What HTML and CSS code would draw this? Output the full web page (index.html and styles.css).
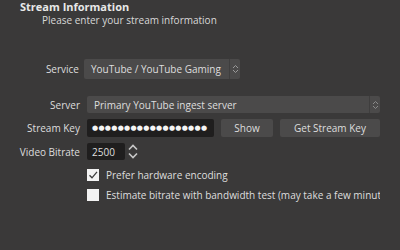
FILE: index.html
```html
<!DOCTYPE html>
<html lang="en">
<head>
    <meta charset="UTF-8">
    <title>Stream Information</title>
    <link rel="stylesheet" href="styles.css">
</head>
<body>

<div class="page">
    <!-- Header -->
    <div class="header">
        <h2>Stream Information</h2>
        <p>Please enter your stream information</p>
    </div>

    <div class="form">
        <!-- Service -->
        <div class="row service-row">
            <label>Service</label>
            <div class="combo service-combo">
                <span>YouTube / YouTube Gaming</span>
                <div class="combo-arrow">
                    <svg width="7" height="10" viewBox="0 0 7 10"><path d="M1 4 L3.5 1.5 L6 4 M1 6 L3.5 8.5 L6 6" fill="none" stroke="#9a9a9a" stroke-width="1"/></svg>
                </div>
            </div>
        </div>

        <!-- Server -->
        <div class="row server-row">
            <label>Server</label>
            <div class="combo server-combo">
                <span>Primary YouTube ingest server</span>
                <div class="combo-arrow">
                    <svg width="7" height="10" viewBox="0 0 7 10"><path d="M1 4 L3.5 1.5 L6 4 M1 6 L3.5 8.5 L6 6" fill="none" stroke="#8a8a8a" stroke-width="1"/></svg>
                </div>
            </div>
        </div>

        <!-- Stream Key -->
        <div class="row">
            <label>Stream Key</label>
            <div class="input key-input">&#9679;&#9679;&#9679;&#9679;&#9679;&#9679;&#9679;&#9679;&#9679;&#9679;&#9679;&#9679;&#9679;&#9679;&#9679;&#9679;&#9679;&#9679;</div>
            <button class="btn show-btn">Show</button>
            <button class="btn key-btn">Get Stream Key</button>
        </div>

        <!-- Video Bitrate -->
        <div class="row bitrate-row">
            <label>Video Bitrate</label>
            <div class="input bitrate-input">2500</div>
            <div class="spin">
                <svg width="12" height="17" viewBox="0 0 12 17"><path d="M2 6.5 L6 2.5 L10 6.5 M2 10.5 L6 14.5 L10 10.5" fill="none" stroke="#c8c8c8" stroke-width="1.6"/></svg>
            </div>
        </div>

        <!-- Checkboxes -->
        <div class="check-row">
            <span class="checkbox">
                <svg width="10" height="10" viewBox="0 0 10 10"><path d="M1.5 5.2 L4 7.8 L9 1.8" fill="none" stroke="#3a3a3a" stroke-width="1.3"/></svg>
            </span>
            <span>Prefer hardware encoding</span>
        </div>
        <div class="check-row">
            <span class="checkbox"></span>
            <span>Estimate bitrate with bandwidth test (may take a few minutes)</span>
        </div>
    </div>
</div>

</body>
</html>
```

FILE: styles.css
```css
/* General Reset */
* {
    box-sizing: border-box;
    margin: 0;
    padding: 0;
}

body {
    font-family: "Open Sans", "Noto Sans", sans-serif;
    font-size: 10px;
    color: #dedede;
    background-color: #3a3939;
    width: 400px;
    height: 250px;
    overflow: hidden;
}

/* Header */
.header {
    padding: 0 0 0 20px;
}

.header h2 {
    font-size: 11px;
    font-weight: bold;
    line-height: 14px;
    color: #e8e8e8;
}

.header p {
    margin-left: 22px;
    line-height: 12px;
    color: #d8d8d8;
}

/* Form */
.form {
    width: 380px;
    overflow: hidden;
    margin-top: 33px;
}

.row {
    display: flex;
    align-items: center;
    gap: 7px;
    margin-bottom: 6px;
}

.row label {
    width: 80px;
    flex-shrink: 0;
    text-align: right;
    white-space: nowrap;
}

.service-row {
    gap: 5px;
    margin-bottom: 17px;
}

.service-row label {
    width: 79px;
}

/* Combo boxes */
.combo {
    display: flex;
    align-items: center;
    background-color: #4b4a4a;
    border-radius: 2px;
    overflow: hidden;
}

.combo span {
    flex: 1;
    padding-left: 7px;
    white-space: nowrap;
    overflow: hidden;
}

.combo-arrow {
    display: flex;
    align-items: center;
    justify-content: center;
    width: 11px;
    height: 100%;
    border-left: 1px solid #3f3e3e;
}

.service-combo {
    width: 156px;
    height: 20px;
}

.server-combo {
    flex: 1;
    height: 17px;
}

/* Inputs */
.input {
    background-color: #1f1e1e;
    height: 18px;
    display: flex;
    align-items: center;
    padding-left: 4px;
    border-radius: 2px;
    white-space: nowrap;
    overflow: hidden;
}

.key-input {
    width: 127px;
    padding-left: 5px;
    font-family: "DejaVu Sans", sans-serif;
    font-size: 7px;
    letter-spacing: 0.3px;
    color: #f4f4f4;
}

.bitrate-row {
    margin-bottom: 8px;
}

.bitrate-input {
    width: 38px;
    height: 17px;
    padding-left: 5px;
}

.spin {
    margin-left: -5px;
    display: flex;
}

/* Buttons */
.btn {
    height: 18px;
    border: none;
    border-radius: 2px;
    background-color: #4b4a4a;
    color: #dedede;
    font-family: inherit;
    font-size: 10px;
}

.show-btn {
    width: 52px;
}

.key-btn {
    flex: 1;
}

/* Checkboxes */
.check-row {
    display: flex;
    align-items: center;
    gap: 7px;
    padding-left: 87px;
    height: 14px;
    margin-bottom: 6px;
    white-space: nowrap;
}

.checkbox {
    width: 12px;
    height: 12px;
    flex-shrink: 0;
    background-color: #f2f2f2;
    display: flex;
    align-items: center;
    justify-content: center;
}
```
